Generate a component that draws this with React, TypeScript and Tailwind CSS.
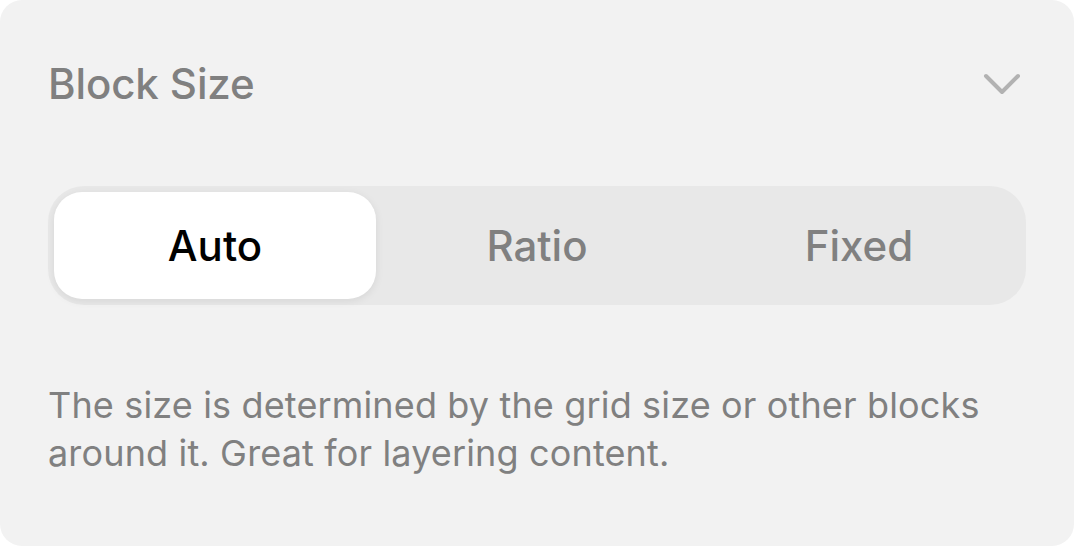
import React, { useState } from 'react';

const options = ['Auto', 'Ratio', 'Fixed'];

export default function App() {
  const [mode, setMode] = useState('Auto');

  return (
    <div className="w-[1074px] h-[546px] bg-white" style={{ fontFamily: 'Inter, "Noto Sans", sans-serif' }}>
      <div className="h-full rounded-[22px] bg-[#f2f2f2] pl-[48px] pr-[48px] pt-[56px]">
        {/* Header */}
        <div className="flex items-center justify-between h-[56px]">
          <h2 className="text-[42px] font-medium leading-none tracking-[-0.1px] text-[#808080]">Block Size</h2>
          <svg width="40" height="28" viewBox="0 0 40 28" fill="none" className="mr-[4px]">
            <path d="M4 6 L20 22 L36 6" stroke="#b2b2b2" strokeWidth="4" strokeLinecap="round" strokeLinejoin="round" />
          </svg>
        </div>

        {/* Segmented control */}
        <div className="mt-[74px] flex h-[119px] rounded-[36px] bg-[#e8e8e8] p-[6px]">
          {options.map((opt) => (
            <button
              key={opt}
              onClick={() => setMode(opt)}
              className={
                mode === opt
                  ? 'flex-1 rounded-[28px] bg-white text-[42px] font-medium text-black shadow-[0_2px_8px_rgba(0,0,0,0.08)]'
                  : 'flex-1 rounded-[28px] text-[42px] font-medium text-[#808080]'
              }
            >
              {opt}
            </button>
          ))}
        </div>

        {/* Description */}
        <p className="mt-[76px] text-[36px] leading-[48px] tracking-[0.15px] text-[#808080]">
          The size is determined by the grid size or other blocks around it. Great for layering content.
        </p>
      </div>
    </div>
  );
}
